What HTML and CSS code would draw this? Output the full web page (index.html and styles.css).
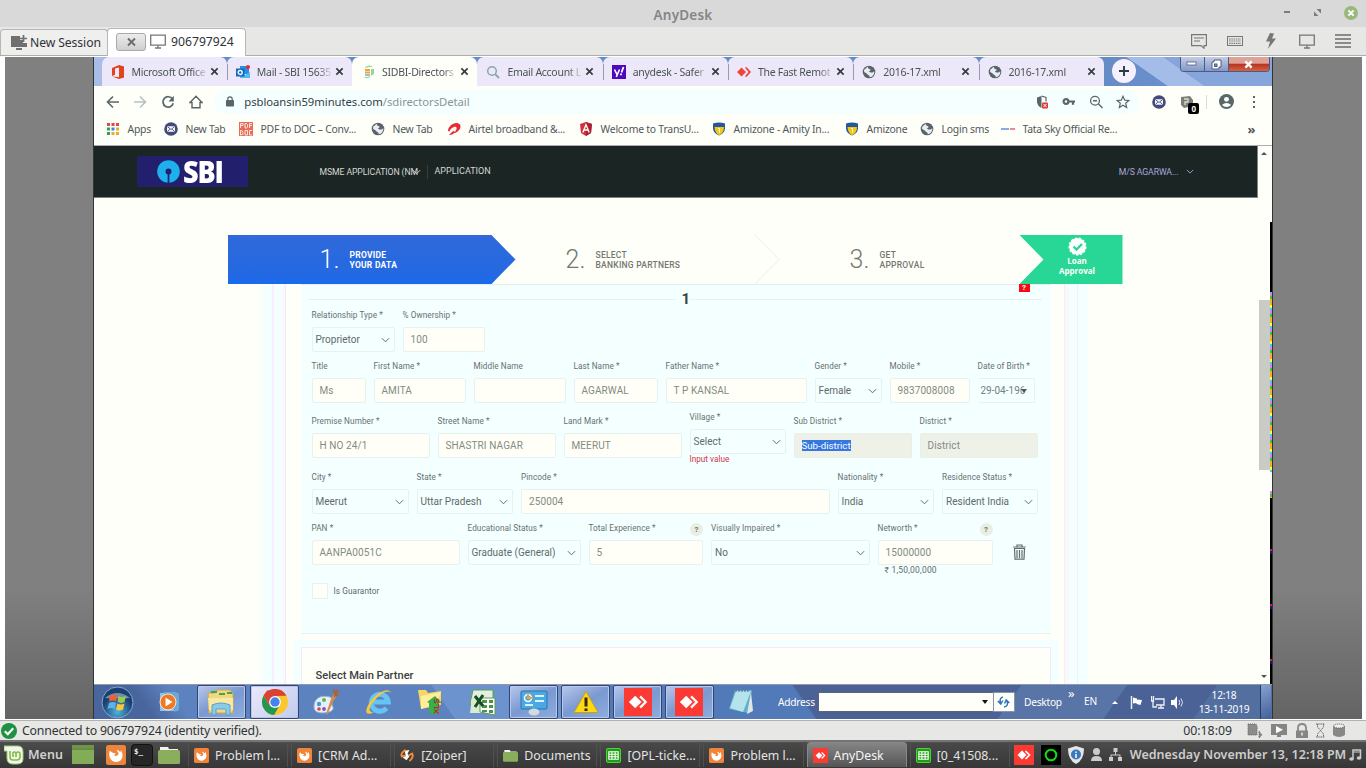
FILE: index.html
```html
<!DOCTYPE html>
<html lang="en">
<head>
<meta charset="utf-8">
<title>AnyDesk</title>
<link rel="stylesheet" href="styles.css">
</head>
<body>
<svg class="defs" width="0" height="0">
  <symbol id="x" viewBox="0 0 10 10"><path d="M1.5 1.5l7 7M8.5 1.5l-7 7" stroke="currentColor" stroke-width="1.9"/></symbol>
  <symbol id="chev" viewBox="0 0 10 6"><path d="M1 1l4 4 4-4" fill="none" stroke="currentColor" stroke-width="1.1"/></symbol>
  <symbol id="globe" viewBox="0 0 14 14"><circle cx="7" cy="7" r="6.3" fill="#5a6468"/><path d="M7 1.5c-2 1-1 2 .5 2.500S9 5.500 7.500 6 9 8 10.500 7.500 12 6 12.300 7c0 2.500-2 5-4.600 5.300C8 11 7 10.500 6 9.800S4.500 8 3 7.500 2 5 2.500 4.500 5 2 7 1.500z" fill="#e8ecf4"/></symbol>
  <symbol id="mail" viewBox="0 0 14 14"><circle cx="7" cy="7" r="6.800" fill="#454b78"/><rect x="3" y="4.200" width="8" height="5.600" rx="1" fill="#f5f5ff"/><path d="M3.500 4.700L7 7.500l3.500-2.800M3.500 9.500l2.300-2.400M10.500 9.500L8.200 7.100" fill="none" stroke="#454b78" stroke-width=".9"/></symbol>
  <symbol id="amity" viewBox="0 0 14 14"><path d="M1 1.500Q7-.5 13 1.500v5Q12.500 11.500 7 13.500 1.500 11.500 1 6.500z" fill="#2457a0"/><path d="M2.500 5h9.500q0 6-5 8.300Q3 11 2.500 5z" fill="#f4c715"/><path d="M6 6.500h1.500v4" stroke="#fff8c0" fill="none"/></symbol>
  <symbol id="anyd" viewBox="0 0 20 20"><rect width="20" height="20" fill="#fb3b33"/><path d="M3.500 10L8 5.500l4.500 4.500L8 14.500z" fill="#fff"/><path d="M11.500 6L15.500 10l-4 4" fill="none" stroke="#fff" stroke-width="1.600"/></symbol>
  <symbol id="fox" viewBox="0 0 16 16"><rect width="16" height="16" rx="2" fill="#f08439"/><path d="M3 4.500C1.500 9 4 13.500 8 13.500s6-3.500 5-7l-1-2.500-.6 2C10.500 4 8.500 4 8.500 4l1.500 2.500c0 2-2.500 3-3.500 1.500L8 7 5 6z" fill="#fff"/></symbol>
  <symbol id="sheet" viewBox="0 0 16 16"><rect x=".5" y=".5" width="15" height="15" rx="1.500" fill="#1f9e15" stroke="#53dc40"/><path d="M3 4h10v8H3zM3 6.700h10M3 9.300h10M6.300 4v8M9.700 4v8" fill="none" stroke="#fff" stroke-width="1.200"/></symbol>
  <symbol id="folder" viewBox="0 0 22 18"><path d="M2 4V1h8l1 2h9v3H2z" fill="#f4f4ee"/><rect y="4" width="22" height="14" rx="1.500" fill="#8aae5d"/></symbol>
  <symbol id="screen" viewBox="0 0 16 15"><path d="M.7 1.200h14.600v10H.7zM8 11v3M5 14h6" fill="none" stroke="currentColor" stroke-width="1.300"/></symbol>
</svg>

<header class="titlebar">
  <span class="titlebar-name">AnyDesk</span>
  <div class="titlebar-buttons">
    <svg width="7" height="3"><rect width="6" height="2" fill="#7c7c7c"/></svg>
    <svg width="7" height="7" viewBox="0 0 7 7"><path d="M2.500 0H7v4.500zM0 2.500V7h4.500z" fill="#7c7c7c"/></svg>
    <svg width="14" height="14" viewBox="0 0 14 14"><circle cx="7" cy="7" r="7" fill="#9ab87c"/><path d="M4.400 4.400l5.200 5.200M9.600 4.400L4.400 9.600" stroke="#fff" stroke-width="2"/></svg>
  </div>
</header>

<nav class="sessions">
  <div class="session new">
    <svg width="17" height="15" viewBox="0 0 17 15"><path d="M0 1h9v4h3v3h4v4H0zM5 13h6v2H5z" fill="#707070"/><path d="M12.500 0v7M9 3.500h7" stroke="#707070" stroke-width="1.700"/></svg>
    <span>New Session</span>
  </div>
  <div class="session current">
    <span class="session-close"><svg width="11" height="10"><use href="#x"/></svg></span>
    <svg class="gray" width="16" height="15"><use href="#screen"/></svg>
    <span>906797924</span>
  </div>
  <div class="session-tools">
    <svg width="16" height="16" viewBox="0 0 16 16"><path d="M.6 1.600h14.800v11H13v2.600L10 12.600H.6zM3 5h10M3 8h6" fill="none" stroke="#777" stroke-width="1.200"/></svg>
    <svg width="16" height="10" viewBox="0 0 16 10"><rect x=".5" y=".5" width="15" height="9" fill="none" stroke="#777"/><path d="M2 3h12M2 5h12M2 7.300h12" stroke="#777" stroke-width="1.200" stroke-dasharray="1.500 .8"/></svg>
    <svg width="16" height="16" viewBox="0 0 16 16"><path d="M7 0l4 .5L9 5.500h4L5 16l2-7.500H3z" fill="#777"/></svg>
    <svg class="gray" width="16" height="15"><use href="#screen"/></svg>
    <svg width="16" height="14" viewBox="0 0 16 14"><path d="M0 1h16M0 5h16M0 9h16M0 13h16" stroke="#6c6c6c" stroke-width="1.700"/></svg>
  </div>
</nav>

<main class="stage">
 <div class="remote">
  <div class="tabs">
    <div class="tab first"><svg viewBox="0 0 14 14"><path d="M1 3l7-3 5 1.500v11L8 14l-7-2.500 7 .8V2.500L4 3.600v6.200L1 11z" fill="#e2431d"/></svg><span>Microsoft Office</span><svg class="tx"><use href="#x"/></svg></div>
    <div class="tab"><svg viewBox="0 0 14 14"><rect x="4" y="1" width="9" height="8" fill="#2d8fdc"/><path d="M4 7l5 3 5-3v6H4z" fill="#58b8f2"/><rect y="3.500" width="8.500" height="8" fill="#0f6bbd"/><circle cx="4.200" cy="7.500" r="2" fill="none" stroke="#fff" stroke-width="1.300"/><circle cx="12" cy="2" r="2" fill="#e22b36"/></svg><span>Mail - SBI 15635</span><svg class="tx"><use href="#x"/></svg></div>
    <div class="tab active"><svg viewBox="0 0 14 14"><path d="M4 2q5-3 8 0-4-.5-8 1zM2 12q5 3 8-1-4 1.500-8 1zM10 4h3v5l-3 2z" fill="#9bd3a0"/><path d="M4 5h5M4 7.500h5" stroke="#e9a83b" stroke-width="1.800"/><path d="M4 10h5" stroke="#73acd8" stroke-width="1.500"/></svg><span>SIDBI-Directors</span><svg class="tx"><use href="#x"/></svg></div>
    <div class="tab plain"><svg viewBox="0 0 14 14"><circle cx="6" cy="6" r="4.300" fill="none" stroke="#8ba6ae" stroke-width="1.500"/><path d="M9 9l4 4" stroke="#8ba6ae" stroke-width="1.800"/></svg><span>Email Account L</span><svg class="tx"><use href="#x"/></svg></div>
    <div class="tab"><svg viewBox="0 0 14 14"><rect width="14" height="14" fill="#5008bf"/><path d="M2.500 4.500L5 9.500M7.500 4.500L4.300 12" stroke="#fff" stroke-width="1.600"/><path d="M11.500 2L9.500 7.500M9 8.500v1.800" stroke="#fff" stroke-width="1.800"/></svg><span>anydesk - Safer</span><svg class="tx"><use href="#x"/></svg></div>
    <div class="tab"><svg viewBox="0 0 14 14"><path d="M0 7l4.500-4.500L9 7l-4.500 4.500zM8 2.800l1.500-.8L14 7l-4.500 5-1.500-.8L11.500 7z" fill="#ef443b"/></svg><span>The Fast Remot</span><svg class="tx"><use href="#x"/></svg></div>
    <div class="tab"><svg><use href="#globe"/></svg><span>2016-17.xml</span><svg class="tx"><use href="#x"/></svg></div>
    <div class="tab"><svg><use href="#globe"/></svg><span>2016-17.xml</span><svg class="tx"><use href="#x"/></svg></div>
    <div class="newtab"><svg width="12" height="12" viewBox="0 0 12 12"><path d="M6 1v10M1 6h10" stroke="#2d3a3a" stroke-width="1.900"/></svg></div>
    <div class="wincontrols">
      <span class="wc"><svg width="12" height="6"><rect x="1" y="1" width="9" height="3" fill="#fff" stroke="#555d80" stroke-width=".8"/></svg></span>
      <span class="wc"><svg width="11" height="11" viewBox="0 0 11 11"><path d="M3 1h7v7H8v2H1V3h2z" fill="#fff" stroke="#555d80"/><rect x="3.500" y="5" width="2.500" height="2.500" fill="#7f92bd" stroke="#555d80"/></svg></span>
      <span class="wc red"><svg width="9" height="9" viewBox="0 0 10 10"><path d="M1.500 1.500l7 7M8.500 1.500l-7 7" stroke="#fff" stroke-width="2.600"/></svg></span>
    </div>
  </div>

  <div class="address">
    <svg class="nav-i" viewBox="0 0 14 14"><path d="M13 7H2M7 1.500L1.500 7 7 12.500" fill="none" stroke="#58666a" stroke-width="1.600"/></svg>
    <svg class="nav-i" viewBox="0 0 14 14"><path d="M1 7h11M7 1.500L12.500 7 7 12.500" fill="none" stroke="#b5c2c4" stroke-width="1.600"/></svg>
    <svg class="nav-i" viewBox="0 0 14 14"><path d="M11.500 4A5.200 5.200 0 1 0 12.200 8.300" fill="none" stroke="#58666a" stroke-width="1.700"/><path d="M12.800.8v5.700H7.500z" fill="#58666a"/></svg>
    <svg class="nav-i" viewBox="0 0 14 14"><path d="M1 7.500L7 1.300l6 6.200h-2v5.300H3V7.500z" fill="none" stroke="#58666a" stroke-width="1.400"/></svg>
    <div class="omnibox">
      <svg width="8" height="11" viewBox="0 0 8 11"><rect y="4" width="8" height="6.500" rx=".7" fill="#58666a"/><path d="M1.800 5V3a2.200 2.200 0 0 1 4.400 0v2" fill="none" stroke="#58666a" stroke-width="1.200"/></svg>
      <span class="url">psbloansin59minutes.com<span class="path">/sdirectorsDetail</span></span>
      <div class="omni-icons">
        <svg viewBox="0 0 14 14"><path d="M6.500 1L2 2.500v4C2 10 4.500 12 6.500 13z" fill="#58666a"/><path d="M6.500 1L11 2.500v4" fill="none" stroke="#58666a" stroke-width="1.200"/><rect x="7" y="7.500" width="6" height="6" rx="1" fill="#dd3b35"/><path d="M8.500 9l3 3M11.500 9l-3 3" stroke="#fff"/></svg>
        <svg viewBox="0 0 14 14"><circle cx="4" cy="6.500" r="2.400" fill="none" stroke="#58666a" stroke-width="2.200"/><path d="M6.500 6.500H13M11 6.500v3.200" stroke="#58666a" stroke-width="2.200"/></svg>
        <svg viewBox="0 0 14 14"><circle cx="6" cy="5.800" r="4.400" fill="none" stroke="#58666a" stroke-width="1.300"/><path d="M9.500 9l4 4M4 5.800h4" stroke="#58666a" stroke-width="1.400"/></svg>
        <svg viewBox="0 0 14 14"><path d="M7 1.300l1.700 3.900 4.200.3-3.200 2.800 1 4.200L7 10.300l-3.700 2.200 1-4.200L1.100 5.500l4.200-.3z" fill="none" stroke="#58666a" stroke-width="1.200"/></svg>
      </div>
    </div>
    <div class="ext">
      <svg width="14" height="14"><use href="#mail"/></svg>
      <span class="counter"><svg width="12" height="12" viewBox="0 0 12 12"><path d="M0 1l9-1 3 4v6l-9 2-3-3z" fill="#7a7f78"/><path d="M3 3h4v3H4v3" stroke="#dadccf" stroke-width="1.300" fill="none"/></svg><b>0</b></span>
      <i class="ext-sep"></i>
      <svg class="avatar" viewBox="0 0 14 14"><circle cx="7" cy="7" r="7" fill="#58666a"/><circle cx="7" cy="5" r="2.300" fill="#fffff9"/><path d="M2.600 10.200Q7 6.500 11.400 10.200 7 14 2.600 10.200z" fill="#fffff9"/></svg>
      <svg width="4" height="14" viewBox="0 0 4 14"><path d="M1 1h2v2H1zM1 6h2v2H1zM1 11h2v2H1z" fill="#58666a"/></svg>
    </div>
  </div>

  <div class="bookmarks">
    <div><svg viewBox="0 0 14 14"><path d="M1 1h3v3H1zM10 1h3v3h-3zM5.500 1h3v3h-3z" fill="#e04a3f"/><path d="M1 5.500h3v3H1zM1 10h3v3H1z" fill="#36a05a"/><path d="M5.500 5.500h3v3h-3z" fill="#3a83e8"/><path d="M10 5.500h3v3h-3zM10 10h3v3h-3zM5.500 10h3v3h-3z" fill="#e9ac2b"/></svg>Apps</div>
    <div><svg><use href="#mail"/></svg>New Tab</div>
    <div><svg viewBox="0 0 14 14"><rect width="14" height="14" fill="#e66b58"/><path d="M1.500 6V1.500H4v2H1.500M6 1.500v4.500h1.500q1 0 1-2t-1-2.500zM10.500 6V1.500H13M10.500 3.500H13M1.500 8.500v4.500q3 0 2.500-2.500t-2.500-2M6 8.500h2.500V13H6zM13 8.500h-2.500V13H13" fill="none" stroke="#fff3e8" stroke-width=".9"/></svg>PDF to DOC – Conv...</div>
    <div><svg><use href="#globe"/></svg>New Tab</div>
    <div><svg viewBox="0 0 14 14"><path d="M1 9C1 4 8-1 12.500 2c3 3-1 8.500-6 9.500C9 9 10.500 6 9 5 7 4 3 7 2.500 9.500zM2 13q3-3 4-4 3 0 1 2-2 2.500-5 2z" fill="#ea2932"/></svg>Airtel broadband &amp;...</div>
    <div><svg viewBox="0 0 14 14"><path d="M7 0l6 2-1 9-5 3-5-3-1-9z" fill="#d3303b"/><path d="M7 0l6 2-1 9-5 3z" fill="#a92430"/><path d="M3.800 10.500L7 2.800l3.200 7.700M5.200 8h3.600" fill="none" stroke="#fff" stroke-width="1.300"/></svg>Welcome to TransU...</div>
    <div><svg><use href="#amity"/></svg>Amizone - Amity In...</div>
    <div><svg><use href="#amity"/></svg>Amizone</div>
    <div><svg><use href="#globe"/></svg>Login sms</div>
    <div><svg viewBox="0 0 14 14"><path d="M0 7h8" stroke="#7ba2e0" stroke-width="1.800"/><path d="M9 7h5" stroke="#ec7d80" stroke-width="1.800"/></svg>Tata Sky Official Re...</div>
    <b>»</b>
  </div>

  <div class="viewport">
    <div class="page">
      <div class="sitebar">
        <div class="sbi"><svg width="23" height="23" viewBox="0 0 23 23"><circle cx="11.500" cy="11.500" r="11.300" fill="#1eb0ec"/><circle cx="11.500" cy="11.500" r="3" fill="#221f6c"/><path d="M11.500 12v11" stroke="#221f6c" stroke-width="1.700"/></svg><span>SBI</span></div>
        <span class="menu-a">MSME APPLICATION (NM<svg width="9" height="6"><use href="#chev"/></svg></span>
        <span class="menu-b">APPLICATION</span>
        <span class="user">M/S AGARWA...<svg width="8" height="5"><use href="#chev"/></svg></span>
      </div>

      <div class="steps">
        <div class="step one"><span class="num">1.</span><span>PROVIDE<br>YOUR DATA</span></div>
        <div class="step two"><span class="num">2.</span><span>SELECT<br>BANKING PARTNERS</span><svg width="25" height="49" viewBox="0 0 25 49"><path d="M0 0l24 24.500L0 49" fill="none" stroke="#e9efe9"/></svg></div>
        <div class="step three"><span class="num">3.</span><span>GET<br>APPROVAL</span></div>
        <div class="loan"><svg width="19" height="19" viewBox="0 0 19 19"><circle cx="9.500" cy="9.500" r="8.300" fill="#fff" stroke="#fff" stroke-width="1.500" stroke-dasharray="2.500 1.500"/><path d="M5.500 9.500l3 3 5.500-5.500" fill="none" stroke="#28d795" stroke-width="2.300"/></svg><span>Loan<br>Approval</span></div>
      </div>

      <div class="partner-area">
        <section class="partner">
          <span class="alert">?</span>
          <div class="divider"><b>1</b></div>
          <div class="row r1">
            <div class="field"><label>Relationship Type *</label><div class="select">Proprietor<svg><use href="#chev"/></svg></div></div>
            <div class="field"><label>% Ownership *</label><div class="input">100</div></div>
          </div>
          <div class="row r2">
            <div class="field"><label>Title</label><div class="input">Ms</div></div>
            <div class="field"><label>First Name *</label><div class="input">AMITA</div></div>
            <div class="field"><label>Middle Name</label><div class="input"></div></div>
            <div class="field"><label>Last Name *</label><div class="input">AGARWAL</div></div>
            <div class="field"><label>Father Name *</label><div class="input">T P KANSAL</div></div>
            <div class="field"><label>Gender *</label><div class="select">Female<svg><use href="#chev"/></svg></div></div>
            <div class="field"><label>Mobile *</label><div class="input">9837008008</div></div>
            <div class="field"><label>Date of Birth *</label><div class="select dob">29-04-196<i></i></div></div>
          </div>
          <div class="row r3">
            <div class="field"><label>Premise Number *</label><div class="input">H NO 24/1</div></div>
            <div class="field"><label>Street Name *</label><div class="input">SHASTRI NAGAR</div></div>
            <div class="field"><label>Land Mark *</label><div class="input">MEERUT</div></div>
            <div class="field village"><label>Village *</label><div class="select">Select<svg><use href="#chev"/></svg></div><em>Input value</em></div>
            <div class="field"><label>Sub District *</label><div class="input disabled"><mark>Sub-district</mark></div></div>
            <div class="field"><label>District *</label><div class="input disabled">District</div></div>
          </div>
          <div class="row r4">
            <div class="field"><label>City *</label><div class="select">Meerut<svg><use href="#chev"/></svg></div></div>
            <div class="field"><label>State *</label><div class="select">Uttar Pradesh<svg><use href="#chev"/></svg></div></div>
            <div class="field"><label>Pincode *</label><div class="input">250004</div></div>
            <div class="field"><label>Nationality *</label><div class="select">India<svg><use href="#chev"/></svg></div></div>
            <div class="field"><label>Residence Status *</label><div class="select">Resident India<svg><use href="#chev"/></svg></div></div>
          </div>
          <div class="row r5">
            <div class="field"><label>PAN *</label><div class="input">AANPA0051C</div></div>
            <div class="field"><label>Educational Status *</label><div class="select">Graduate (General)<svg><use href="#chev"/></svg></div></div>
            <div class="field"><label>Total Experience *<span class="help">?</span></label><div class="input">5</div></div>
            <div class="field"><label>Visually Impaired *</label><div class="select">No<svg><use href="#chev"/></svg></div></div>
            <div class="field"><label>Networth *<span class="help">?</span></label><div class="input">15000000</div><small>₹ 1,50,00,000</small></div>
            <svg class="trash" width="13" height="16" viewBox="0 0 13 16"><path d="M.3 3h12.400M4 3V1h5v2M1.500 4.500h10l-.5 10.700H2zM4 6v8M6.500 6v8M9 6v8" fill="none" stroke="#626c6c" stroke-width="1.200"/></svg>
          </div>
          <div class="guarantor"><i></i>Is Guarantor</div>
        </section>
        <section class="main-partner">Select Main Partner</section>
      </div>
    </div>
    <div class="scrollbar"><i class="up"></i><i class="thumb"></i><i class="down"></i></div>
    <div class="noise"></div>
  </div>

  <div class="win">
    <div class="cell start"><svg width="33" height="33" viewBox="0 0 33 33"><defs><radialGradient id="orb" cy=".8"><stop stop-color="#4fb4e0"/><stop offset="1" stop-color="#1c3f72"/></radialGradient></defs><circle cx="16.500" cy="16.500" r="15.500" fill="url(#orb)" stroke="#86a9cf"/><path d="M4 12Q16 2 29 12 17 13 4 12" fill="#a8c2dc" opacity=".6"/><path d="M9 10q4-2.500 7-.5l-1 6q-3-2-7 0z" fill="#ee6230"/><path d="M17.500 10q3 2 7.500 0l-1.500 6q-4 2-7-.5z" fill="#9bcb4b"/><path d="M8 17q4-2 7 0l-1.500 6q-3-2-7 0z" fill="#60b0ea"/><path d="M16.500 17.500q3 2 7 0l-1.500 6q-4 2-7 0z" fill="#fbc837"/></svg></div>
    <div class="cell"><svg width="24" height="24" viewBox="0 0 24 24"><path d="M3 3h18v18H3z" fill="#8fc3e5"/><path d="M6 2h12l4 2v16l-4 2z" fill="#6ba8d5"/><circle cx="11" cy="12" r="8" fill="#f07820" stroke="#fff" stroke-width=".8"/><path d="M8.500 7.500l7 4.500-7 4.500z" fill="#fff"/></svg></div>
    <div class="cell open"><svg width="28" height="28" viewBox="0 0 28 28"><path d="M1 5h7l2-3h13l3 4v19H2z" fill="#f0d782" stroke="#cda94b"/><path d="M4 4h6M12 6h6M20 5h5" stroke="#48a34b" stroke-width="2"/><path d="M1 10h25v12H2z" fill="#fae9a4"/><path d="M5 27V17q9-4 18 0v10h-4v-6H9v6z" fill="#8acbe8" stroke="#5a9fc9"/></svg></div>
    <div class="cell open hot"><svg width="26" height="26" viewBox="0 0 26 26"><circle cx="13" cy="13" r="13" fill="#fbc72f"/><path d="M1.700 6.500A13 13 0 0 1 24.300 6.500H13z" fill="#d94235"/><path d="M1.700 6.500A13 13 0 0 0 12 26l5-8.500-9.500-1z" fill="#249653"/><path d="M1.700 6.500L7.500 16.300 13 7l11.300-.5-5-5H5z" fill="#d94235"/><circle cx="13" cy="13" r="5.900" fill="#fff"/><circle cx="13" cy="13" r="4.700" fill="#4584ee"/></svg></div>
    <div class="cell"><svg width="27" height="27" viewBox="0 0 27 27"><path d="M1 18C1 8 9 6 17 8c5 2 1 6 2 8s3 5-3 7C8 25 1 24 1 18z" fill="#e8eef7" stroke="#9eb1ca"/><circle cx="6" cy="15" r="2.200" fill="#419bd6"/><circle cx="11" cy="11" r="2" fill="#61b74c"/><circle cx="6" cy="20" r="1.800" fill="#d44444"/><circle cx="11" cy="20" r="1.900" fill="#8555b4"/><path d="M22 1l4 3-5 7-7 15-1-1 5-15z" fill="#cf8e4c"/><path d="M20 0l6 1-1 6-4 1z" fill="#9f6847"/></svg></div>
    <div class="cell"><svg width="28" height="28" viewBox="0 0 28 28"><path d="M21.500 20a8.500 8.500 0 1 1 1.800-6H8" fill="none" stroke="#65c4f4" stroke-width="5"/><path d="M26.500 6C25-2 12 4 5 14-1 23 0 29 9 24 3 25 3 20 10 12 17 4 25 1 26.500 6z" fill="#f4c843"/></svg></div>
    <div class="cell"><svg width="26" height="28" viewBox="0 0 26 28"><path d="M1 2h8l2 3 13-2v14L4 21z" fill="#f5d766"/><path d="M4 8l20-4-5 12L4 21z" fill="#ffef9b"/><path d="M18 8l7 7h-3v10q-7 3-10-1v-9l-2-1z" fill="#38b04a"/><text x="13" y="23" transform="rotate(-90 19 20)" class="xls">XLS</text></svg></div>
    <div class="cell"><svg width="27" height="27" viewBox="0 0 27 27"><path d="M4 1h20v14H1z" fill="#e4f0df" stroke="#59a055"/><path d="M3 8h15v16H1z" fill="#d9ead1"/><path d="M11 9h15v17l-15-3z" fill="#fff" stroke="#5c9b55"/><path d="M13 11h5v3h-5zM20 11h4v3h-4zM13 16h5v3h-5zM20 16h4v3h-4zM13 21h5v2h-5zM20 21h4v3h-4z" fill="#4c924b"/><path d="M6 7l8 10M14 6L6 18" stroke="#164f20" stroke-width="3"/></svg></div>
    <div class="cell open"><svg width="28" height="28" viewBox="0 0 28 28"><rect x="1" y="3" width="26" height="18" rx="1" fill="#4aa9e1" stroke="#2475b4"/><circle cx="8" cy="10" r="3.500" fill="none" stroke="#fff" stroke-width="1.500"/><path d="M8 5v5h5" stroke="#f2a23c" stroke-width="1.800" fill="none"/><path d="M15 8h9M15 13h9M5 17h8" stroke="#d6f1ff" stroke-width="2"/><ellipse cx="14" cy="24" rx="5.500" ry="3.500" fill="#d5dadd"/></svg></div>
    <div class="cell open"><svg width="26" height="25" viewBox="0 0 26 25"><path d="M13 1.500l12 21H1z" fill="#fbd916" stroke="#c9a010" stroke-linejoin="round"/><path d="M13 7.500v9M13 18.500v2.500" stroke="#34290a" stroke-width="3"/></svg></div>
    <div class="cell open"><svg width="28" height="28"><use href="#anyd"/></svg></div>
    <div class="cell open"><svg width="28" height="28"><use href="#anyd"/></svg></div>
    <div class="cell"><svg width="26" height="26" viewBox="0 0 26 26"><path d="M7 1h17l-4 23-19-4z" fill="#5fb3cf"/><path d="M8 2h15l-8 21L2 19z" fill="#b5e3ec"/><path d="M8 1v2M11 1v2M14 1v2M17 1v2M20 1v2" stroke="#567"/><path d="M23 3l2 19-6 3z" fill="#e2e7e3"/></svg></div>
    <div class="tray">
      <span>Address</span>
      <div class="addr-input"><i></i></div>
      <div class="addr-go"><svg width="13" height="12" viewBox="0 0 13 12"><path d="M6 1Q2 2 3.500 7M.8 5l3 3 2-3.500M7 11q5-1 3-6M7.500 7.500L9.300 4l3 3" fill="none" stroke="#2e74bb" stroke-width="1.500"/></svg></div>
      <span class="desk">Desktop</span><span class="more">»</span><span class="lang">EN</span>
      <i class="tri"></i>
      <svg class="t1" width="14" height="13" viewBox="0 0 14 13"><path d="M1.500 0v13" stroke="#e9eef8" stroke-width="1.500"/><path d="M3 1.500l4 1v1l5 .5-1.500 5-4-1v-1L3 7.500z" fill="#fff"/></svg>
      <svg class="t2" width="14" height="13" viewBox="0 0 14 13"><path d="M4 3h9v6H5M7 12h6M10 9v3M2.500 0v5h-2V0M2 5v6h4" fill="none" stroke="#eef3fa" stroke-width="1.300"/></svg>
      <svg class="t3" width="14" height="13" viewBox="0 0 14 13"><path d="M0 4h3l3-4v13L3 9H0z" fill="#fff"/><path d="M8 4q1.500 2.500 0 5M10 2.500q3 4 0 8" fill="none" stroke="#dce6f5"/></svg>
      <div class="clock">12:18<br>13-11-2019</div>
      <i class="showdesk"></i>
    </div>
  </div>
 </div>
</main>

<footer class="status">
  <svg width="16" height="16" viewBox="0 0 16 16"><circle cx="8" cy="8" r="8" fill="#209043"/><path d="M3.800 8.200l3 3 5.400-6" fill="none" stroke="#fff" stroke-width="2.200"/></svg>
  <span class="connected">Connected to 906797924 (identity verified).</span>
  <span class="elapsed">00:18:09</span>
  <div class="status-icons">
    <svg width="16" height="16" viewBox="0 0 16 16"><path d="M1 1h8q2 3 1 5v6H1zM12 8l3 4-3 3z" fill="#8c8c8c" stroke="#666" stroke-dasharray="1 1"/></svg>
    <svg width="16" height="14" viewBox="0 0 16 14"><path d="M0 0h16v11H10v2H6v-2H0z" fill="#858585"/><path d="M5 2l7 3.700L5 9.300z" fill="#fff"/></svg>
    <svg width="12" height="15" viewBox="0 0 12 15"><path d="M2 8V5q0-4 4-4t4 4v3" fill="none" stroke="#888" stroke-width="1.800"/><path d="M0 7.500h12V15H0z" fill="#858585"/><path d="M6 9.500v3" stroke="#eee" stroke-width="1.500"/></svg>
    <svg width="9" height="15" viewBox="0 0 9 15"><path d="M0 1h9M0 14h9M1.500 1v3l3 3.500-3 3.500v3M7.500 1v3l-3 3.500 3 3.500v3" fill="none" stroke="#666" stroke-dasharray="1.500 .7"/></svg>
    <svg width="12" height="15" viewBox="0 0 12 15"><path d="M0 3v9q6 4 12 0V3q-6 2-12 0" fill="#888"/><ellipse cx="6" cy="3" rx="5.500" ry="2" fill="#eee" stroke="#555" stroke-dasharray="1 1"/></svg>
  </div>
</footer>

<div class="panel">
  <svg width="20" height="20" viewBox="0 0 20 20"><path d="M0 1h14q5 0 5 6v7q0 5-6 5H9q-6 0-6-6V6H0z" fill="#f4f5ef" stroke="#9bcf6b"/><path d="M6 6v6q0 3 3 3h4q3 0 3-3V9q0-2-2-2t-2 2v3M12 12V9q0-2-1.700-2T9 9v3" fill="none" stroke="#80bf46" stroke-width="1.600"/></svg>
  <b class="menu">Menu</b>
  <svg class="p1" width="22" height="19" viewBox="0 0 22 19"><rect width="22" height="19" fill="#83ab58"/><path d="M0 4h22" stroke="#486b2b"/><rect width="22" height="3.500" fill="#6f9349"/></svg>
  <svg class="p2" width="20" height="20"><use href="#fox"/></svg>
  <svg class="p3" width="22" height="22" viewBox="0 0 22 22"><rect x=".5" y=".5" width="21" height="21" rx="3" fill="#262626" stroke="#111"/><text x="3" y="9.500" class="prompt">$_</text></svg>
  <svg class="p4" width="22" height="18"><use href="#folder"/></svg>
  <div class="tasks">
    <div class="task"><svg><use href="#fox"/></svg>Problem l...</div>
    <div class="task"><svg><use href="#fox"/></svg>[CRM Ad...</div>
    <div class="task"><svg viewBox="0 0 16 16"><path d="M5 3l5-1-2 4 2 3-3 4-4-3 3-2z" fill="#fff"/><path d="M6 2q-6 4-4 7l4-1M10 14q5-4 3-8l-4 2" fill="none" stroke="#f28c3b" stroke-width="2"/></svg>[Zoiper]</div>
    <div class="task"><svg><use href="#folder"/></svg>Documents</div>
    <div class="task"><svg><use href="#sheet"/></svg>[OPL-ticke...</div>
    <div class="task"><svg><use href="#fox"/></svg>Problem l...</div>
    <div class="task on"><svg><use href="#anyd"/></svg>AnyDesk</div>
    <div class="task"><svg><use href="#sheet"/></svg>[0_41508...</div>
  </div>
  <div class="systray">
    <svg width="20" height="20"><use href="#anyd"/></svg>
    <svg width="20" height="20" viewBox="0 0 20 20"><rect width="20" height="20" fill="#000"/><circle cx="10" cy="10" r="5.300" fill="none" stroke="#0fdf0f" stroke-width="2"/></svg>
    <svg width="16" height="18" viewBox="0 0 16 18"><path d="M8 0l8 2.500Q16 14 8 18 0 14 0 2.500z" fill="#e6e6e6"/><circle cx="8" cy="8.500" r="5" fill="#3978bf"/><path d="M8 5.500v1.500M8 8v4" stroke="#fff" stroke-width="1.500"/></svg>
    <svg width="11" height="13" viewBox="0 0 11 13"><circle cx="5.500" cy="3.500" r="3.500" fill="#ccc"/><path d="M0 13q0-5 5.500-5t5.500 5z" fill="#ccc"/></svg>
    <svg width="13" height="13" viewBox="0 0 13 13"><path d="M4.500 0h4v4h-4zM0 9h4v4H0zM9 9h4v4H9zM6 4h1v2.500h4.500V9h-1V7.500h-8V9h-1V6.500H6z" fill="#ccc"/></svg>
  </div>
  <b class="today">Wednesday November 13, 12:18 PM</b>
  <svg width="13" height="12" viewBox="0 0 13 12"><path d="M4 10V1h7.500v8" fill="none" stroke="#ccc" stroke-width="1.500"/><path d="M4 3h7" stroke="#ccc"/><ellipse cx="2.500" cy="10" rx="2.300" ry="1.800" fill="#ccc"/><ellipse cx="10" cy="9" rx="2.300" ry="1.800" fill="#ccc"/></svg>
</div>
</body>
</html>
```

FILE: styles.css
```css
* { box-sizing: border-box; }
body { margin: 0; width: 1366px; height: 768px; overflow: hidden; font-family: "Noto Sans", sans-serif; background: #e7e7e5; }
svg { display: block; flex: none; }
i, em { font-style: normal; }
.defs { position: absolute; }

/* AnyDesk window */
.titlebar { height: 27px; display: grid; grid-template-columns: 1fr auto 1fr; align-items: center; background: #d9d9d9; }
.titlebar-name { grid-column: 2; font: 600 13.5px/27px "Noto Sans"; letter-spacing: .2px; color: #858585; padding-top: 2px; }
.titlebar-buttons { display: flex; justify-content: flex-end; align-items: center; gap: 23px; padding: 0 8px 4px 0; }
.titlebar-buttons svg:first-child { margin-right: 0; }
.gray { color: #777; }
.sessions { height: 29px; display: flex; align-items: flex-end; border-bottom: 1px solid #adadaa; background: #e7e7e5; font-size: 12.200px; color: #2f3436; }
.session { display: flex; align-items: center; border: 1px solid #b6b6b3; border-bottom: 0; border-radius: 4px 4px 0 0; }
.session.new { width: 108px; height: 26px; padding-left: 10px; gap: 2px; background: #efefee; white-space: nowrap; letter-spacing: -.1px; }
.session.current { width: 139px; height: 28px; margin-bottom: -1px; padding: 0 0 2px 8px; background: #fff; position: relative; left: -1px; }
.session-close { width: 30px; height: 18px; display: grid; place-items: center; margin-right: 4px; border: 1px solid #a9a9a9; border-radius: 3px; color: #6c6c6c; background: linear-gradient(#ececec, #cfcfcf); }
.session.current > .gray { margin-right: 5px; }
.session-tools { margin-left: auto; height: 28px; padding-right: 15px; display: flex; gap: 20px; align-items: center; }
.stage { height: 664px; display: flex; justify-content: center; padding: 1px 2px 1px 0; border: solid #fff; border-width: 0 4px 0 5px; background: linear-gradient(#808080 80%, #646464); box-shadow: inset 0 1px #fff, inset 0 -1px #fff; }
.remote { width: 1180px; height: 662px; border: solid #303636; border-width: 0 1px; background: #fffff9; display: flex; flex-direction: column; }

/* Browser chrome */
.tabs { height: 29px; flex: none; display: flex; align-items: flex-start; padding-left: 8px; background: linear-gradient(35deg, transparent 0 88%, #a4bce8 88.1% 91%, #86a5da 91.1%) no-repeat, linear-gradient(90deg, #a9bde8 0 7px, #668cc8 40px 86%, #7297d0); }
.tab { width: 125.300px; height: 29px; flex: none; display: flex; align-items: center; padding-left: 9px; background: #ede8f9; border-radius: 7px 7px 0 0; color: #4c5355; font-size: 10.500px; letter-spacing: -.28px; position: relative; }
.tab:not(.first, .active, .plain)::before { content: ""; position: absolute; left: 0; top: 7px; width: 1px; height: 16px; background: #9a9aae; }
.tab > svg { width: 14px; height: 14px; }
.tab > span { width: 78px; margin-left: 7px; overflow: hidden; white-space: nowrap; -webkit-mask-image: linear-gradient(90deg, #000 78%, transparent 98%); mask-image: linear-gradient(90deg, #000 78%, transparent 98%); }
.tab > .tx { width: 9px; height: 9px; color: #363e40; }
.tab.active { background: #fffff9; }
.newtab { width: 24px; height: 24px; margin: 2px 0 0 8px; border-radius: 50%; background: #f5f0fb; display: grid; place-items: center; }
.wincontrols { display: flex; margin: 0 2px 0 auto; height: 15px; border: 1px solid #4d5b84; border-top: 0; border-radius: 0 0 4px 4px; overflow: hidden; }
.wc { width: 24px; display: grid; place-items: center; background: linear-gradient(#c3cde5, #8299c6); border-right: 1px solid #4d5b84; }
.wc.red { width: 40px; border: 0; background: linear-gradient(#dfa297 0 45%, #b73222 50%, #d46440); }
.address { height: 31px; flex: none; display: flex; align-items: center; padding-left: 12px; background: #fffff9; }
.nav-i { width: 14px; height: 14px; margin-right: 13.700px; }
.omnibox { width: 925px; height: 24px; margin-left: -2px; border-radius: 12px; background: #f5ffff; display: flex; align-items: center; padding-left: 12px; font-size: 11.300px; letter-spacing: -.05px; color: #363e42; }
.url { margin-left: 10px; }
.path { color: #899496; }
.omni-icons { margin-left: auto; display: flex; gap: 13px; padding-right: 9px; }
.omni-icons svg { width: 14px; height: 14px; }
.ext { display: flex; align-items: center; margin-left: 13px; }
.counter { position: relative; margin-left: 15px; }
.counter b { position: absolute; left: 7px; top: 7px; width: 11px; height: 11px; border-radius: 2px; background: #000; color: #fff; font: 700 8px/11px "Noto Sans"; text-align: center; }
.ext-sep { width: 1px; height: 14px; background: #d5dfdf; margin: 0 12px 0 13px; }
.avatar { width: 15px; height: 15px; margin-right: 18px; }
.bookmarks { height: 29px; flex: none; display: grid; grid-template-columns: 58px 75px 132px 76px 132px 133px 133px 75px 81px 247px auto; align-items: center; padding: 0 0 5px 12px; border-bottom: 1px solid #aba9b3; font-size: 10.400px; letter-spacing: -.22px; color: #50575b; background: #fffff9; white-space: nowrap; }
.bookmarks > div { display: flex; align-items: center; gap: 8px; }
.bookmarks svg { width: 14px; height: 14px; }
.bookmarks b { font-size: 13px; line-height: 14px; }

/* Loan application page */
.viewport { height: 538px; flex: none; display: flex; overflow: hidden; }
.page { width: 1164px; font-family: Roboto, sans-serif; background: #fffff9; }
.sitebar { height: 52px; display: flex; align-items: center; padding-left: 43px; border-right: 1px solid #7f8483; border-bottom: 1px solid #7f8483; background: #1b2624; color: #d5d7d4; font-size: 8.700px; letter-spacing: -.1px; white-space: nowrap; }
.sbi { width: 111px; height: 31px; display: flex; align-items: center; gap: 3px; padding-left: 20px; background: #221f6c; color: #fff; }
.sbi span { font: 800 30px/31px "Open Sans"; letter-spacing: -1.200px; transform: scaleX(.9); transform-origin: left; }
.menu-a { width: 108px; margin-left: 72px; height: 14px; line-height: 14px; display: flex; align-items: center; border-right: 1px solid #35403e; }
.menu-a svg { margin-left: -6px; }
.menu-b { margin-left: 7px; font-size: 9px; letter-spacing: 0; padding-bottom: 2px; }
.user { margin: 0 63px 0 auto; display: flex; align-items: center; gap: 7px; color: #aaa8df; }
.steps { width: 895px; height: 48px; margin: 37px 0 0 134px; display: grid; grid-template-columns: 288px 264px 240px 103px; position: relative; z-index: 1; background: #fffff9; }
.step { display: flex; align-items: center; font: 500 8.500px/10px Roboto; letter-spacing: .25px; color: #747770; }
.step .num { width: 30px; font: 300 25px/48px Roboto; padding-top: 1px; }
.one { padding-left: 92px; background: linear-gradient(#3069da, #2469e2 80%, #196aef); color: #fff; font-weight: 700; clip-path: polygon(0 0, 264px 0, 100% 50%, 264px 100%, 0 100%); }
.two { padding-left: 50px; }
.two svg { margin-left: auto; }
.three { padding-left: 70px; }
.loan { display: flex; flex-direction: column; align-items: center; padding: 2px 0 0 12px; background: #28d795; clip-path: polygon(0 0, 100% 0, 100% 100%, 0 100%, 24px 50%); color: #fff; font: 700 8px/10px "Open Sans"; text-align: center; }
.partner-area { width: 834px; height: 401px; margin: 1px 0 0 164px; padding: 0 43px; background: linear-gradient(90deg, #fafffa 0 5px, #f3ffff 5px 14px, #f9eefb 14px 16px, #f6ffff 16px 25px, #fdf6ff 25px 27px, #f4e9fa 27px 28px, #fffff9 28px 806px, #f2f2e8 806px 807px, #fcf7fe 807px 811px, #f4ffff 811px 819px, #f9ebf8 819px 820px, #f4ffff 820px 830px, #fffff9 830px); }
.partner { height: 350px; width: 750px; padding-left: 11px; border-top: 1px solid #e3efef; border-bottom: 1px solid #e6f3f1; background: #f4ffff; position: relative; }
.alert { position: absolute; left: 718px; top: -1px; width: 11px; height: 8px; background: #f50c12; color: #fff; font: 700 8px/7px Roboto; text-align: center; }
.divider { width: 734px; height: 22px; margin-left: -4px; padding-top: 6px; display: flex; align-items: center; font-size: 15px; line-height: 16px; color: #3b4242; }
.divider::before { content: ""; height: 1px; width: 367px; background: #e5f1f1; margin-right: 7px; }
.divider::after { content: ""; height: 1px; flex: 1; background: #e5f1f1; }
.row { display: grid; gap: 8px; height: 45px; align-items: start; }
.r1 { grid-template-columns: 83px 82px; }
.r2 { grid-template-columns: 54px 92px 92px 84px 141px 67px 80px 57px; margin-top: 6px; }
.r3 { grid-template-columns: 118px 118px 118px 96px 118px 118px; margin-top: 10px; }
.r4 { grid-template-columns: 97px 96.500px 308.500px 96.500px 96px; margin-top: 11px; }
.r5 { grid-template-columns: 148px 113px 114.500px 158.500px 115px auto; margin-top: 6px; }
.field label { height: 16px; margin-bottom: 4px; display: flex; align-items: center; white-space: nowrap; font-size: 8.200px; letter-spacing: .08px; color: #667070; }
.input, .select { height: 25px; display: flex; align-items: center; border: 1px solid #e5f2ef; border-radius: 2px; font-size: 10px; letter-spacing: .1px; white-space: nowrap; }
.input { padding-left: 7px; background: #fffff8; color: #838b83; }
.select { padding: 0 4px 0 3px; letter-spacing: 0; color: #5f6a6a; }
.select svg { width: 9px; height: 6px; margin-left: auto; }
.dob { border-left: 0; color: #788080; }
.dob i { margin-left: -4px; border: 3px solid transparent; border-top: 4px solid #555; border-bottom: 0; }
.village { position: relative; top: -4px; }
.village em { display: block; font-size: 8.200px; line-height: 10px; color: #d0374b; }
.disabled { background: #eef1e8; border-color: #eaf0e6; }
mark { background: #3877e0; color: #f4ffff; line-height: 11px; letter-spacing: 0; font-size: 9.700px; }
.help { margin: 3px 0 0 auto; width: 13px; height: 13px; border-radius: 50%; background: #e9eee2; color: #777; font: 700 8px/13px Roboto; text-align: center; }
.field small { display: block; padding-left: 7px; font: 8.500px/11px Roboto, "Noto Sans"; letter-spacing: .2px; color: #626b6b; }
.trash { margin: 24px 0 0 12px; }
.guarantor { display: flex; align-items: center; gap: 6px; margin-top: 18px; font-size: 8.200px; letter-spacing: .1px; color: #5d6666; }
.guarantor i { width: 16px; height: 16px; border: 1px solid #e5f2ef; background: #fffff8; }
.main-partner { width: 750px; height: 38px; margin-top: 13px; padding: 17px 0 0 14px; border: 1px solid #f4ebf4; border-bottom: 0; box-shadow: 0 0 0 7px #f4ffff; background: #fffff9; font: 500 11.100px/21px Roboto; color: #3c4242; }
.scrollbar { width: 12px; display: flex; flex-direction: column; align-items: center; background: #fffff9; }
.up { margin-top: 6px; border: 3px solid transparent; border-top: 0; border-bottom: 3px solid #505655; }
.thumb { width: 11px; height: 170px; margin: 145px 0 auto; align-self: flex-end; background: #c9ccc4; }
.down { margin-bottom: 6px; border: 3px solid transparent; border-bottom: 0; border-top: 3px solid #505655; }
.noise { width: 2px; background: linear-gradient(#fffff9 0 76px, #000 76px 146px, transparent 146px 326px, #fffff9 326px 345px, transparent 345px 352px, #000 352px 403px, #e12 403px 405px, #118 405px 408px, #000 408px 458px, #e12 458px 460px, #118 460px 463px, #000 463px 513px, #e12 513px 515px, #118 515px 518px, #000 518px), repeating-linear-gradient(#4cf 0 3px, #e7e 3px 6px, #3c3 6px 9px, #fa3 9px 15px, #ff4 15px 18px); }

/* Windows taskbar */
.win { height: 35px; flex: none; display: flex; border-top: 1px solid #8f97b5; background: linear-gradient(55deg, #49659d 0 5%, #5d82c0 8% 30%, #6d93ce 30.100% 42%, #5279b8 42.100% 60%, #4a6295 60.200%); }
.cell { width: 51.800px; flex: none; display: flex; align-items: center; justify-content: center; }
.start { width: 50px; padding-right: 3px; }
.open { width: 49px; margin: 0 1.400px; border: 1px solid #35456f; border-radius: 2px; box-shadow: inset 0 0 0 1px #b7c8ee; background: linear-gradient(150deg, #b9c7eb, #7999d1 50%, #8eaee0); }
.hot { margin-left: 3.400px; background: linear-gradient(135deg, #ece9fa, #c1caed); }
.tray { flex: 1; display: flex; align-items: center; padding-left: 11px; color: #fff; font-size: 10.200px; letter-spacing: -.25px; background: linear-gradient(125deg, transparent 48%, #5974a6 48.200% 68%, transparent 68.200% 85%, #536f9f 85.200%); white-space: nowrap; }
.tray > span:first-child { width: 39px; }
.addr-input { width: 176px; height: 20px; margin-left: 1px; border: 1px solid #5d6474; background: #fffff9; display: flex; align-items: center; justify-content: flex-end; padding-right: 5px; }
.addr-input i { border: 3px solid transparent; border-top: 4px solid #111; border-bottom: 0; }
.addr-go { width: 22px; height: 20px; margin-left: -1px; display: grid; place-items: center; border: 1px solid #8a93a8; background: #fffff9; }
.desk { margin-left: 9px; width: 44px; }
.more { width: 16px; font-size: 13px; padding-bottom: 19px; }
.lang { width: 28px; padding-bottom: 3px; }
.tri { border: 3px solid transparent; border-top: 0; border-bottom: 3px solid #fff; margin-right: 12px; }
.t2 { margin: 0 6px 0 7px; }
.clock { width: 66px; margin-left: 6px; line-height: 14.500px; text-align: center; }
.showdesk { width: 11px; height: 34px; margin: 0 1px 0 auto; border-left: 1px solid #263b67; background: linear-gradient(150deg, #86a2cf, #405f9a); }
.xls { font: 700 8px "Liberation Sans"; fill: #ce202c; }

/* AnyDesk status bar and desktop panel */
.status { height: 20px; display: flex; align-items: center; gap: 5px; padding: 0 21px 0 1px; border-top: 1px solid #b2b2af; background: #e7e7e5; font-size: 12.300px; color: #2f3436; }
.connected { letter-spacing: -.19px; }
.elapsed { margin-left: auto; }
.status-icons { display: flex; align-items: center; gap: 6px; width: 98px; margin-left: 10px; justify-content: space-between; }
.panel { height: 28px; display: flex; align-items: center; padding: 0 0 1px 4px; border-top: 2px solid #747474; background: linear-gradient(#4c4c4c, #363636); color: #e4e4e4; font-size: 12.300px; white-space: nowrap; }
.menu { width: 39px; margin: 0 5px 0 4px; font-size: 12.500px; font-weight: 600; color: #d0d0d0; }
.p2 { margin-left: 12px; }
.p3 { margin: 0 5px; }
.prompt { font: 700 7.500px "DejaVu Sans Mono"; fill: #eee; }
.tasks { display: flex; gap: 3px; margin-left: 8px; align-self: stretch; }
.task { width: 100.100px; display: flex; align-items: center; padding-left: 5px; border-radius: 4px 4px 0 0; border: 1px solid #505050; border-bottom: 0; background: linear-gradient(#484848, #383838); }
.task svg { width: 15px; height: 15px; margin-right: 6px; }
.task.on { background: linear-gradient(#858585, #555); border-color: #888; color: #f6f6f6; }
.systray { display: flex; align-items: center; gap: 7px; margin-left: 4px; }
.today { margin: 0 7px 0 8px; width: 212px; font-size: 12.500px; font-weight: 600; color: #cdcdcd; }
```
